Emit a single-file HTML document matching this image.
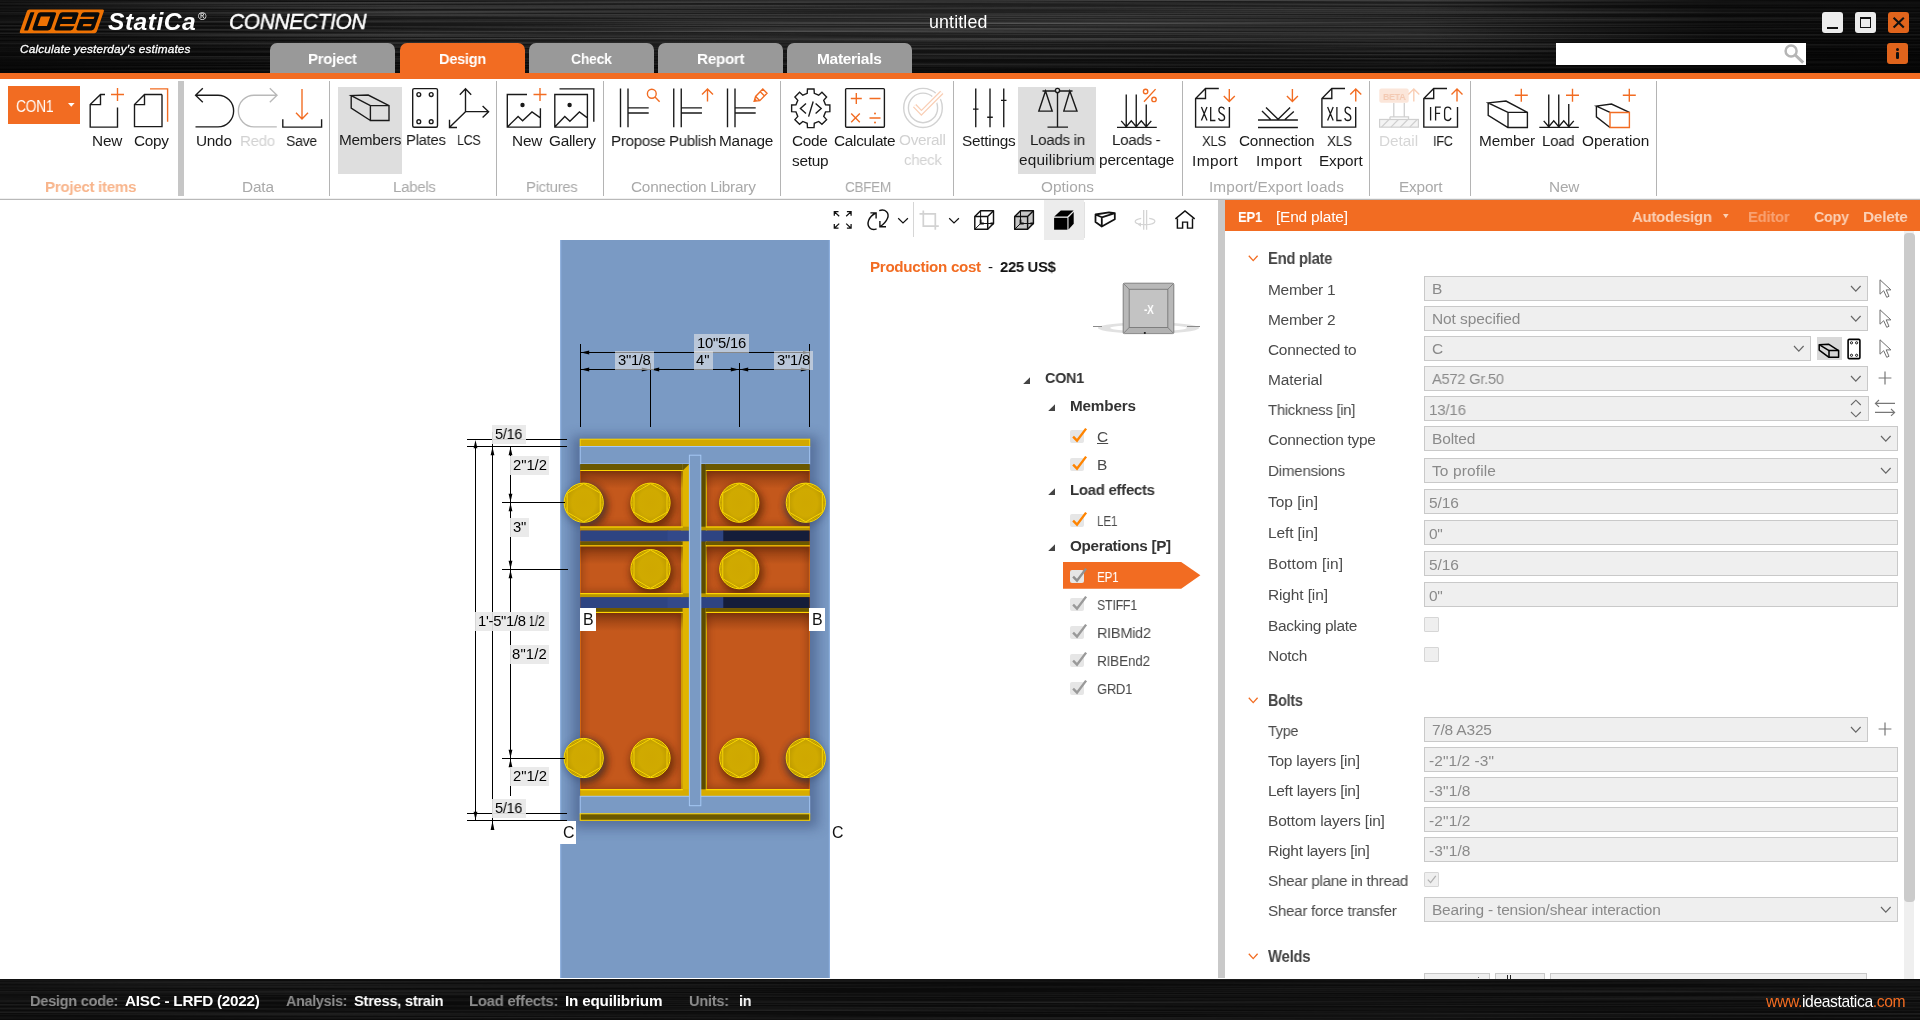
<!DOCTYPE html>
<html>
<head>
<meta charset="utf-8">
<title>IDEA StatiCa Connection</title>
<style>
*{box-sizing:border-box;margin:0;padding:0}
html,body{width:1920px;height:1020px;overflow:hidden;background:#fff;font-family:"Liberation Sans",sans-serif;color:#1a1a1a}
.a{position:absolute}
.t{position:absolute;white-space:nowrap;line-height:1;will-change:transform}
svg{position:absolute;overflow:visible}
/* ---------- header ---------- */
#hdr{left:0;top:0;width:1920px;height:73px;background:#101010;overflow:hidden}
#hdr .tex,#sb .tex{position:absolute;left:0;top:0;width:100%;height:100%}
#obar{left:0;top:73px;width:1920px;height:6px;background:#f26c22}
.tab{position:absolute;top:43px;width:125px;height:31px;border-radius:7px 7px 0 0;background:#999;color:#fff;font-weight:bold;font-size:15.5px;text-align:center;line-height:31px;letter-spacing:-0.2px}
.tab.on{background:#f26c22}
.wb{position:absolute;top:12px;width:21px;height:21px;border-radius:3px;background:#ececec}
/* ---------- ribbon ---------- */
#rib{left:0;top:79px;width:1920px;height:120px;background:#fff}
#ribline{left:0;top:198px;width:1920px;height:2px;background:linear-gradient(#f0f0f0 0,#f0f0f0 50%,#b9b9b9 50%,#b9b9b9 100%)}
.sep{position:absolute;top:82px;width:1px;height:114px;background:#b9b9b9}
.gl{position:absolute;top:179px;font-size:15px;color:#a6a6a6;white-space:nowrap;line-height:1;transform:translateX(-50%)}
.rl{position:absolute;font-size:15px;color:#1a1a1a;white-space:nowrap;line-height:20px;text-align:center;transform:translateX(-50%)}
.rl.dis{color:#c8c8c8}
.hl{position:absolute;background:#dedede}
.ic{stroke:#1a1a1a;stroke-width:1.38;fill:none;stroke-linecap:butt;stroke-linejoin:miter}
.io{stroke:#f26c22;stroke-width:1.38;fill:none}
/* ---------- status ---------- */
#sb{left:0;top:978.6px;width:1920px;height:41.4px;background:#0b0b0b;overflow:hidden}
#sb .k{color:#8a8a8a;font-weight:bold;font-size:15px}
#sb .v{color:#fff;font-weight:bold;font-size:15px}
</style>
</head>
<body>
<!-- texture filter -->
<svg width="0" height="0" style="position:absolute">
  <defs>
    <filter id="brush" x="0" y="0" width="100%" height="100%">
      <feTurbulence type="fractalNoise" baseFrequency="0.0015 0.55" numOctaves="2" seed="7" result="n"/>
      <feColorMatrix type="matrix" values="0 0 0 0 1  0 0 0 0 1  0 0 0 0 1  0.9 0 0 0 -0.33"/>
    </filter>
  </defs>
</svg>

<!-- ================= HEADER ================= -->
<div id="hdr" class="a">
  <svg class="tex" width="1920" height="73"><rect width="1920" height="73" filter="url(#brush)" opacity="0.55"/></svg>
  <div class="a" style="left:0;top:0;width:1920px;height:73px;background:radial-gradient(ellipse 900px 60px at 1000px 22px,rgba(255,255,255,.085),rgba(255,255,255,0) 100%)"></div>
  <div class="a" style="left:0;top:0;width:1920px;height:73px;background:linear-gradient(to bottom,rgba(0,0,0,0) 0%,rgba(0,0,0,0) 45%,rgba(0,0,0,.6) 100%)"></div>
  <div class="a" style="left:0;top:0;width:420px;height:73px;background:linear-gradient(to right,rgba(0,0,0,.45),rgba(0,0,0,0))"></div>
  <div class="a" style="left:1420px;top:0;width:500px;height:73px;background:linear-gradient(to right,rgba(0,0,0,0),rgba(0,0,0,.55) 60%,rgba(0,0,0,.6))"></div>
  <svg class="a" style="left:0;top:0" width="420" height="73">
<g transform="translate(19.2,33.2) skewX(-19.3)"><rect x="0" y="-23.7" width="77" height="23.7" rx="1.8" fill="#ee7203"/><path d="M4.5,-21 H7.4 Q8,-21 8,-20.4 V-3.35 Q8,-2.75 7.4,-2.75 H4.5 Q3.9,-2.75 3.9,-3.35 V-20.4 Q3.9,-21 4.5,-21 Z " fill="#0a0a0a"/><path d="M14.1,-21 H27.8 Q30.2,-21 30.2,-18.6 V-5.15 Q30.2,-2.75 27.8,-2.75 H14.1 Q11.7,-2.75 11.7,-5.15 V-18.6 Q11.7,-21 14.1,-21 Z  M15.8,-16.7 V-7.2 H25.2 V-16.7 Z" fill="#0a0a0a" fill-rule="evenodd"/><path d="M36.0,-21 H50.2 Q52.6,-21 52.6,-18.6 V-5.15 Q52.6,-2.75 50.2,-2.75 H36.0 Q33.6,-2.75 33.6,-5.15 V-18.6 Q33.6,-21 36.0,-21 Z " fill="#0a0a0a"/><rect x="37.6" y="-16.5" width="10" height="2.3" fill="#ee7203"/><rect x="38" y="-9.3" width="15" height="2.3" fill="#ee7203"/><path d="M58.0,-21 H71.19999999999999 Q73.6,-21 73.6,-18.6 V-5.15 Q73.6,-2.75 71.19999999999999,-2.75 H58.0 Q55.6,-2.75 55.6,-5.15 V-18.6 Q55.6,-21 58.0,-21 Z " fill="#0a0a0a"/><rect x="55" y="-16.5" width="14.5" height="2.3" fill="#ee7203"/><rect x="61" y="-9.3" width="8.3" height="2.3" fill="#ee7203"/></g></svg>
<div class="t" style="left:107.60px;top:10.28px;font-size:24.6px;color:#fff;font-weight:bold;font-style:italic;letter-spacing:0.507px;">StatiCa</div>
<div class="t" style="left:197.60px;top:10.67px;font-size:11.5px;color:#fff;">®</div>
<div class="t" style="left:229.00px;top:11.45px;font-size:21.2px;color:#fff;font-style:italic;letter-spacing:-0.300px;transform:scaleX(0.9835);transform-origin:0 0;-webkit-text-stroke:0.45px #fff;">CONNECTION</div>
<div class="t" style="left:19.50px;top:43.81px;font-size:11.8px;color:#fff;font-style:italic;letter-spacing:0.165px;-webkit-text-stroke:0.3px #fff;">Calculate yesterday&#x27;s estimates</div>

  <!--TABS-->
  <div class="tab" style="left:270px"></div>
  <div class="tab on" style="left:400px"></div>
  <div class="tab" style="left:529px"></div>
  <div class="tab" style="left:658px"></div>
  <div class="tab" style="left:787px"></div>
  <div class="t" style="left:307.90px;top:50.88px;font-size:15.5px;color:#fff;font-weight:bold;letter-spacing:-0.300px;transform:scaleX(0.9656);transform-origin:0 0;">Project</div>
<div class="t" style="left:438.80px;top:50.88px;font-size:15.5px;color:#fff;font-weight:bold;letter-spacing:-0.300px;transform:scaleX(0.9407);transform-origin:0 0;">Design</div>
<div class="t" style="left:571.00px;top:50.88px;font-size:15.5px;color:#fff;font-weight:bold;letter-spacing:-0.300px;transform:scaleX(0.9002);transform-origin:0 0;">Check</div>
<div class="t" style="left:696.90px;top:50.88px;font-size:15.5px;color:#fff;font-weight:bold;letter-spacing:-0.300px;transform:scaleX(0.9826);transform-origin:0 0;">Report</div>
<div class="t" style="left:817.20px;top:50.88px;font-size:15.5px;color:#fff;font-weight:bold;letter-spacing:-0.300px;transform:scaleX(0.9969);transform-origin:0 0;">Materials</div>

  <div class="t" style="left:928.60px;top:14.33px;font-size:17.8px;color:#fff;letter-spacing:0.143px;">untitled</div>

  <div class="wb" style="left:1822px"></div><div class="wb" style="left:1855px"></div><div class="wb" style="left:1888px;background:#e0641c"></div>
<div class="a" style="left:1827px;top:27px;width:11px;height:2.2px;background:#111;"></div>
<div class="a" style="left:1859.8px;top:17.2px;width:11.6px;height:10.8px;border:1.5px solid #111;border-top-width:2.4px"></div>
<svg class="a" style="left:1888px;top:12px" width="21" height="21"><path d="M5.6,5.8 L15.8,15.4 M15.8,5.8 L5.6,15.4" stroke="#111" stroke-width="2.1" fill="none"/></svg>
<div class="a" style="left:1556px;top:43px;width:250px;height:21.5px;background:#fff;"></div>
<svg class="a" style="left:1780px;top:43px" width="26" height="22"><circle cx="11.1" cy="7.9" r="5.5" stroke="#b5b5b5" stroke-width="2.5" fill="none"/><path d="M15.2,12 L23.2,19.6" stroke="#b5b5b5" stroke-width="3" fill="none"/></svg>
<div class="a" style="left:1887px;top:43px;width:21px;height:21px;background:#e0641c;border-radius:3px;"></div>
<div class="a" style="left:1896.4px;top:52.2px;width:2.6px;height:6.8px;background:#111;border-radius:1.3px;"></div>
<div class="a" style="left:1896.2px;top:48px;width:3px;height:3px;background:#111;border-radius:1.5px;"></div>

</div>
<div id="obar" class="a"></div>

<!-- ================= RIBBON ================= -->
<div id="rib" class="a"></div>
<div id="ribline" class="a"></div>
<div class="a" style="left:338px;top:87px;width:63.75px;height:87px;background:#dedede;"></div>
<div class="a" style="left:1018px;top:87px;width:77.75px;height:87px;background:#dedede;"></div>
<div class="a" style="left:178.25px;top:81px;width:5.5px;height:115px;background:#c6c6c6;"></div>
<div class="a" style="left:329px;top:81px;width:1px;height:115px;background:#b4b4b4;"></div>
<div class="a" style="left:496px;top:81px;width:1px;height:115px;background:#b4b4b4;"></div>
<div class="a" style="left:603px;top:81px;width:1px;height:115px;background:#b4b4b4;"></div>
<div class="a" style="left:780px;top:81px;width:1px;height:115px;background:#b4b4b4;"></div>
<div class="a" style="left:953px;top:81px;width:1px;height:115px;background:#b4b4b4;"></div>
<div class="a" style="left:1181.5px;top:81px;width:1px;height:115px;background:#b4b4b4;"></div>
<div class="a" style="left:1369px;top:81px;width:1px;height:115px;background:#b4b4b4;"></div>
<div class="a" style="left:1470px;top:81px;width:1px;height:115px;background:#b4b4b4;"></div>
<div class="a" style="left:1656px;top:81px;width:1px;height:115px;background:#b4b4b4;"></div>
<div class="a" style="left:8px;top:86px;width:72px;height:38px;background:#f26c22;"></div>
<div class="t" style="left:16.20px;top:98.52px;font-size:15.69px;color:#fff;letter-spacing:-0.300px;transform:scaleX(0.8784);transform-origin:0 0;">CON1</div>
<svg class="a" style="left:68px;top:102.6px" width="7" height="4"><path d="M0,0 H6.6 L3.3,3.8 Z" fill="#fff"/></svg>
<svg class="a" style="left:0;top:0" width="1920" height="200"><g transform="matrix(1,0,0,1.0117,0,-1.135)"><path class="ic" d="M105,94.5 H100.5 L90.2,104.5 V126.8 H117.5 V107.5 M100.5,94.5 V104.5 H90.2" />
<path class="io" d="M111.0,94.5 H124.0 M117.5,88.0 V101.0" />
<path class="ic" d="M162,94.5 H144.5 L134.5,104.5 V126.3 H162 V94.5 M144.5,94.5 V104.5 H134.5" />
<path class="io" d="M150,89 H167.6 V121.5" />
<path class="ic" d="M195.5,95.25 H218 A15.6,15.6 0 0 1 218,126.5 H195.5 M202.8,88.4 L195.6,95.25 L202.8,102.1" />
<path class="ic" style="stroke:#b9b9b9" d="M276.8,95.25 H254 A15.6,15.6 0 0 0 254,126.5 H276.8 M269.8,88.4 L277,95.25 L269.8,102.1"/>
<path class="ic" d="M282.8,119 V126.8 H321.6 V119" />
<path class="io" d="M302,89 V118.6 M296,112.6 L302,118.8 L308,112.6" />
<path class="ic" d="M370.4,105.5 H389 V120.2 H370.4 Z M370.4,105.5 L351.2,95.6 L368.2,95.1 L389,105.5 M351.2,95.6 V108 L370.4,120.2" />
<rect class="ic" x="412.7" y="88.7" width="24.8" height="38.2" rx="1.5"/>
<circle class="ic" cx="418.8" cy="94.6" r="1.9"/>
<circle class="ic" cx="431.2" cy="94.6" r="1.9"/>
<circle class="ic" cx="418.8" cy="121.4" r="1.9"/>
<circle class="ic" cx="431.2" cy="121.4" r="1.9"/>
<path class="ic" d="M465.5,89 V111.5 H488.5 M465.5,111.5 L449.6,127 M459.8,94.8 L465.5,88.8 L471.2,94.8 M482.6,105.8 L488.6,111.5 L482.6,117.2 M449.5,119.6 V127.1 H457" />
<path class="ic" d="M527,94.5 H507.3 V126.8 H540.4 V108 M507.6,126.4 L518.1,116.2 L522.6,120.5 L532,111.8 L540.4,117.6" />
<path class="io" d="M533.5,94.5 H546.5 M540,88.0 V101.0" />
<circle cx="522.5" cy="104.9" r="2.2" fill="#1a1a1a"/>
<path class="ic" d="M554.8,94.5 H587.4 V126.8 H554.8 Z M555,126.4 L564.8,116.2 L569.9,120.9 L579.4,111.8 L587.4,117.6 M559.5,89 H593.8 V121.5" />
<circle cx="569.6" cy="104.9" r="2.2" fill="#1a1a1a"/>
<path class="ic" d="M620.5,88.5 V127 M628.0,88.5 V127 M628.0,107.8 H648.7 M628.0,112.8 H648.7" />
<path class="ic" d="M673.75,88.5 V127 M681.25,88.5 V127 M681.25,107.8 H701.95 M681.25,112.8 H701.95" />
<path class="ic" d="M727.5,88.5 V127 M735.0,88.5 V127 M735.0,107.8 H755.7 M735.0,112.8 H755.7" />
<circle class="io" cx="651.8" cy="93.8" r="4.4"/>
<path class="io" d="M655,97 L659.6,101.8" />
<path class="io" d="M707.5,101.5 V89 M702.0,94.5 L707.5,89 L713.0,94.5" />
<path class="io" d="M754.2,101.2 L755.6,96.4 L762.8,89.2 L767,93.4 L759.8,100.6 Z M755.6,96.4 L759.8,100.6 M760.3,91.7 L764.5,95.9" />
<path d="M753.6,101.8 L755,98.2 L757.2,100.4 Z" fill="#f26c22"/>
<path class="ic" d="M807.21,93.42 L807.47,89.08 L814.03,89.08 L814.29,93.42 L818.70,95.24 L821.95,92.36 L826.59,97.00 L823.71,100.25 L825.53,104.66 L829.87,104.92 L829.87,111.48 L825.53,111.74 L823.71,116.15 L826.59,119.40 L821.95,124.04 L818.70,121.16 L814.29,122.98 L814.03,127.32 L807.47,127.32 L807.21,122.98 L802.80,121.16 L799.55,124.04 L794.91,119.40 L797.79,116.15 L795.97,111.74 L791.63,111.48 L791.63,104.92 L795.97,104.66 L797.79,100.25 L794.91,97.00 L799.55,92.36 L802.80,95.24 Z" stroke-linejoin="round"/>
<path class="ic" d="M806,103.4 L800.4,108.4 L806,113.4 M813.2,101.4 L808.6,116.4 M815.6,103.4 L821.2,108.4 L815.6,113.4" />
<rect class="ic" x="845.6" y="88.7" width="38.8" height="38.2" rx="1"/>
<path class="io" d="M850.8,98.5 H861.8 M856.3,93 V104 M869.5,98.5 H880.5 M851.2,113.4 L859.8,122 M859.8,113.4 L851.2,122 M869.5,117.75 H880.5" />
<circle cx="875" cy="113.4" r="1" fill="#f26c22"/><circle cx="875" cy="122.1" r="1" fill="#f26c22"/>
<circle cx="923" cy="107.8" r="19.3" fill="none" stroke="#d2d2d2" stroke-width="1.4"/><circle cx="923" cy="107.8" r="14.6" fill="none" stroke="#d2d2d2" stroke-width="1.4"/>
<path d="M914.6,105.6 L921.4,112.6 L941.8,92.4" fill="none" stroke="#fff" stroke-width="7.5"/>
<path d="M914.6,105.6 L921.4,112.6 L941.8,92.4" fill="none" stroke="#f9cfb6" stroke-width="4.6" stroke-linejoin="miter"/>
<path d="M914.6,105.6 L921.4,112.6 L941.8,92.4" fill="none" stroke="#fff" stroke-width="2"/>
<path class="ic" d="M975.75,88.5 V127 M990,88.5 V127 M1003.75,88.5 V127 M973,109 H978.5 M987.2,117 H992.8 M1001,100.3 H1006.5" />
<path class="ic" d="M1057.5,92.5 V126.7 M1047.5,126.8 H1068 M1042.5,91 H1055.4 M1059.6,91 H1072.5 M1045.5,91 L1038.8,111 H1052.2 Z M1069.8,91 L1063.8,111 H1077 Z" />
<circle class="ic" cx="1057.5" cy="90.6" r="2.1"/>
<path class="ic" d="M1117,127 H1156.8 M1126.25,94.6 V126 M1136.25,94.6 V126 M1146.25,104.4 V126 M1121.2,120.6 L1126.25,126.4 L1131.25,120.6 L1136.25,126.4 L1141.25,120.6 L1146.25,126.4 L1151.3,120.6" />
<circle class="io" cx="1145.6" cy="91.6" r="2.2"/><circle class="io" cx="1154" cy="99.4" r="2.2"/>
<path class="io" d="M1155.6,89.2 L1144,101.6" />
<path class="ic" d="M1218.8,88.6 H1205.5 L1195.6,98.5 V126.8 H1229.4 V107 M1205.5,88.6 V98.5 H1195.6" />
<path class="ic" d="M1201.4,107 L1207.0,120.2 M1207.0,107 L1201.4,120.2 M1210.7,107 V120.2 H1215.4 M1224.4,109.2 Q1223.8000000000002,107 1221.6000000000001,107 Q1218.9,107 1218.9,110 Q1218.9,112.4 1221.6000000000001,113.6 Q1224.6000000000001,114.9 1224.6000000000001,117.4 Q1224.6000000000001,120.2 1221.6000000000001,120.2 Q1219.1000000000001,120.2 1218.6000000000001,117.8" style="stroke-width:1.3"/>
<path class="io" d="M1229.3,89 V101.5 M1223.8,96.0 L1229.3,101.5 L1234.8,96.0" />
<path class="ic" d="M1258,119.8 H1297.9 M1258,127.2 H1297.9 M1262,110.9 L1270.6,119.3 M1266,107.3 L1278.1,119 L1290.1,107.3 M1285,119.3 L1293.8,111.3" />
<path class="io" d="M1292.4,89 V101.5 M1286.9,96.0 L1292.4,101.5 L1297.9,96.0" />
<path class="ic" d="M1345,88.6 H1331.8 L1321.9,98.5 V126.8 H1355.7 V107 M1331.8,88.6 V98.5 H1321.9" />
<path class="ic" d="M1327.6,107 L1333.1999999999998,120.2 M1333.1999999999998,107 L1327.6,120.2 M1336.8999999999999,107 V120.2 H1341.6 M1350.6,109.2 Q1350.0,107 1347.8,107 Q1345.1,107 1345.1,110 Q1345.1,112.4 1347.8,113.6 Q1350.8,114.9 1350.8,117.4 Q1350.8,120.2 1347.8,120.2 Q1345.3,120.2 1344.8,117.8" style="stroke-width:1.3"/>
<path class="io" d="M1355.75,101.5 V89 M1350.25,94.5 L1355.75,89 L1361.25,94.5" />
<rect x="1379.3" y="88.6" width="29.4" height="14.2" rx="2" fill="#fbe6da"/>
<path d="M1393.8,103 V116.5 M1404.3,103 V116.5 M1390,116.6 H1408.5 V119 M1390,116.6 V119" fill="none" stroke="#d0d0d0" stroke-width="1.3"/>
<rect x="1379.6" y="119.2" width="38.8" height="7.6" fill="#f4f4f4" stroke="#cfcfcf" stroke-width="1.2"/>
<path d="M1381.5,126.8 L1389.0,119.2 M1390.9,126.8 L1398.4,119.2 M1400.3,126.8 L1407.8,119.2 M1409.7,126.8 L1417.2,119.2" fill="none" stroke="#cfcfcf" stroke-width="1.2"/>
<path d="M1413.8,101.5 V89 M1408.3,94.5 L1413.8,89 L1419.3,94.5" fill="none" stroke="#f9cfb6" stroke-width="1.4"/>
<path class="ic" d="M1447,88.6 H1433.7 L1423.8,98.5 V126.8 H1457.5 V107 M1433.7,88.6 V98.5 H1423.8" />
<path class="ic" d="M1430.6,107 V120.2 M1435.6,120.2 V107 H1440.8 M1435.6,113.2 H1440.1 M1450.8999999999999,109.6 Q1450.3999999999999,107 1447.8999999999999,107 Q1444.6,107 1444.6,110.6 V116.6 Q1444.6,120.2 1447.8999999999999,120.2 Q1450.3999999999999,120.2 1450.8999999999999,117.6" style="stroke-width:1.3"/>
<path class="io" d="M1457,101.5 V89 M1451.5,94.5 L1457,89 L1462.5,94.5" />
<path class="ic" d="M1508,112.2 H1527.4 V127.2 H1508 Z M1508,112.2 L1488.2,102.8 L1506,101 L1527.4,112.2 M1488.2,102.8 V115.2 L1508,127.2" />
<path class="io" d="M1514.8,95.3 H1527.8 M1521.3,88.8 V101.8" />
<path class="ic" d="M1539.3,127 H1578.8 M1548.75,94.6 V126 M1558.75,94.6 V126 M1568.75,104 V126 M1543.7,120.6 L1548.75,126.4 L1553.75,120.6 L1558.75,126.4 L1563.75,120.6 L1568.75,126.4 L1573.8,120.6" />
<path class="io" d="M1566.0,95.3 H1579.0 M1572.5,88.8 V101.8" />
<path class="ic" d="M1610,112.3 L1596.4,106 L1611.5,104 L1629.4,112.3 M1596.4,106 V116.6 L1610,127.2" />
<path class="io" d="M1610,112.3 H1629.4 V127.2 H1610 Z" />
<path class="io" d="M1622.8,95.3 H1635.8 M1629.3,88.8 V101.8" /></g></svg>
<div class="t" style="left:1382.60px;top:91.95px;font-size:9.75px;color:#f3c9b2;font-weight:bold;letter-spacing:-0.300px;transform:scaleX(0.9030);transform-origin:0 0;">BETA</div>
<div class="t" style="left:91.90px;top:132.89px;font-size:15.37px;color:#1a1a1a;letter-spacing:-0.149px;">New</div>
<div class="t" style="left:133.65px;top:132.89px;font-size:15.37px;color:#1a1a1a;letter-spacing:-0.300px;transform:scaleX(0.9991);transform-origin:0 0;">Copy</div>
<div class="t" style="left:195.90px;top:132.89px;font-size:15.37px;color:#1a1a1a;letter-spacing:-0.265px;">Undo</div>
<div class="t" style="left:239.90px;top:132.89px;font-size:15.37px;color:#d2d2d2;letter-spacing:-0.300px;transform:scaleX(0.9820);transform-origin:0 0;">Redo</div>
<div class="t" style="left:285.65px;top:132.89px;font-size:15.37px;color:#1a1a1a;letter-spacing:-0.300px;transform:scaleX(0.9141);transform-origin:0 0;">Save</div>
<div class="t" style="left:338.90px;top:132.49px;font-size:15.37px;color:#1a1a1a;letter-spacing:-0.267px;">Members</div>
<div class="t" style="left:405.65px;top:132.49px;font-size:15.37px;color:#1a1a1a;letter-spacing:-0.300px;transform:scaleX(0.9692);transform-origin:0 0;">Plates</div>
<div class="t" style="left:457.40px;top:132.49px;font-size:15.37px;color:#1a1a1a;letter-spacing:-0.300px;transform:scaleX(0.8089);transform-origin:0 0;">LCS</div>
<div class="t" style="left:511.90px;top:132.89px;font-size:15.37px;color:#1a1a1a;letter-spacing:-0.149px;">New</div>
<div class="t" style="left:549.40px;top:132.89px;font-size:15.37px;color:#1a1a1a;letter-spacing:-0.289px;">Gallery</div>
<div class="t" style="left:611.40px;top:132.89px;font-size:15.37px;color:#1a1a1a;letter-spacing:-0.300px;transform:scaleX(0.9865);transform-origin:0 0;">Propose</div>
<div class="t" style="left:668.65px;top:132.89px;font-size:15.37px;color:#1a1a1a;letter-spacing:-0.300px;transform:scaleX(0.9761);transform-origin:0 0;">Publish</div>
<div class="t" style="left:718.65px;top:132.89px;font-size:15.37px;color:#1a1a1a;letter-spacing:-0.219px;">Manage</div>
<div class="t" style="left:792.40px;top:132.89px;font-size:15.37px;color:#1a1a1a;letter-spacing:-0.300px;transform:scaleX(0.9960);transform-origin:0 0;">Code</div>
<div class="t" style="left:792.40px;top:152.89px;font-size:15.37px;color:#1a1a1a;letter-spacing:-0.287px;">setup</div>
<div class="t" style="left:833.65px;top:132.89px;font-size:15.37px;color:#1a1a1a;letter-spacing:-0.300px;transform:scaleX(0.9963);transform-origin:0 0;">Calculate</div>
<div class="t" style="left:898.90px;top:132.49px;font-size:15.37px;color:#d2d2d2;letter-spacing:-0.300px;transform:scaleX(0.9961);transform-origin:0 0;">Overall</div>
<div class="t" style="left:903.90px;top:152.49px;font-size:15.37px;color:#d2d2d2;letter-spacing:-0.300px;transform:scaleX(0.9743);transform-origin:0 0;">check</div>
<div class="t" style="left:961.90px;top:132.89px;font-size:15.37px;color:#1a1a1a;letter-spacing:-0.262px;">Settings</div>
<div class="t" style="left:1029.90px;top:132.49px;font-size:15.37px;color:#1a1a1a;letter-spacing:-0.300px;transform:scaleX(0.9855);transform-origin:0 0;">Loads in</div>
<div class="t" style="left:1018.90px;top:152.49px;font-size:15.37px;color:#1a1a1a;letter-spacing:0.163px;">equilibrium</div>
<div class="t" style="left:1111.90px;top:132.49px;font-size:15.37px;color:#1a1a1a;letter-spacing:-0.300px;transform:scaleX(0.9845);transform-origin:0 0;">Loads -</div>
<div class="t" style="left:1098.90px;top:152.49px;font-size:15.37px;color:#1a1a1a;letter-spacing:-0.162px;">percentage</div>
<div class="t" style="left:1201.90px;top:132.89px;font-size:15.37px;color:#1a1a1a;letter-spacing:-0.300px;transform:scaleX(0.8506);transform-origin:0 0;">XLS</div>
<div class="t" style="left:1191.90px;top:152.89px;font-size:15.37px;color:#1a1a1a;letter-spacing:0.428px;">Import</div>
<div class="t" style="left:1239.40px;top:132.89px;font-size:15.37px;color:#1a1a1a;letter-spacing:-0.229px;">Connection</div>
<div class="t" style="left:1255.65px;top:152.89px;font-size:15.37px;color:#1a1a1a;letter-spacing:0.428px;">Import</div>
<div class="t" style="left:1327.40px;top:132.89px;font-size:15.37px;color:#1a1a1a;letter-spacing:-0.300px;transform:scaleX(0.8769);transform-origin:0 0;">XLS</div>
<div class="t" style="left:1318.90px;top:152.89px;font-size:15.37px;color:#1a1a1a;letter-spacing:-0.144px;">Export</div>
<div class="t" style="left:1379.40px;top:132.89px;font-size:15.37px;color:#d6d6d6;letter-spacing:-0.019px;">Detail</div>
<div class="t" style="left:1433.15px;top:132.89px;font-size:15.37px;color:#1a1a1a;letter-spacing:-0.300px;transform:scaleX(0.8258);transform-origin:0 0;">IFC</div>
<div class="t" style="left:1478.90px;top:132.89px;font-size:15.37px;color:#1a1a1a;letter-spacing:-0.034px;">Member</div>
<div class="t" style="left:1542.40px;top:132.89px;font-size:15.37px;color:#1a1a1a;letter-spacing:-0.300px;transform:scaleX(0.9822);transform-origin:0 0;">Load</div>
<div class="t" style="left:1581.90px;top:132.89px;font-size:15.37px;color:#1a1a1a;letter-spacing:-0.006px;">Operation</div>
<div class="t" style="left:44.50px;top:179.10px;font-size:15.48px;color:#f8b58c;font-weight:bold;letter-spacing:-0.300px;transform:scaleX(0.9774);transform-origin:0 0;">Project items</div>
<div class="t" style="left:241.90px;top:179.19px;font-size:15.37px;color:#a9a9a9;letter-spacing:-0.172px;">Data</div>
<div class="t" style="left:392.65px;top:179.19px;font-size:15.37px;color:#a9a9a9;letter-spacing:-0.300px;transform:scaleX(0.9808);transform-origin:0 0;">Labels</div>
<div class="t" style="left:525.65px;top:179.19px;font-size:15.37px;color:#a9a9a9;letter-spacing:-0.300px;transform:scaleX(0.9678);transform-origin:0 0;">Pictures</div>
<div class="t" style="left:630.65px;top:179.19px;font-size:15.37px;color:#a9a9a9;letter-spacing:-0.239px;">Connection Library</div>
<div class="t" style="left:844.90px;top:179.19px;font-size:15.37px;color:#a9a9a9;letter-spacing:-0.300px;transform:scaleX(0.8784);transform-origin:0 0;">CBFEM</div>
<div class="t" style="left:1041.40px;top:179.19px;font-size:15.37px;color:#a9a9a9;">Options</div>
<div class="t" style="left:1209.40px;top:179.19px;font-size:15.37px;color:#a9a9a9;letter-spacing:0.094px;">Import/Export loads</div>
<div class="t" style="left:1398.90px;top:179.19px;font-size:15.37px;color:#a9a9a9;letter-spacing:-0.194px;">Export</div>
<div class="t" style="left:1548.90px;top:179.19px;font-size:15.37px;color:#a9a9a9;letter-spacing:-0.149px;">New</div>


<!-- ================= VIEWPORT ================= -->
<svg class="a" style="left:0;top:0" width="1920" height="1020"><defs><filter id="bl6" x="-30%" y="-30%" width="160%" height="160%"><feGaussianBlur stdDeviation="6"/></filter><filter id="bl3" x="-30%" y="-30%" width="160%" height="160%"><feGaussianBlur stdDeviation="3.5"/></filter><radialGradient id="bg"><stop offset="0" stop-color="#cfa800"/><stop offset="0.7" stop-color="#d0aa00"/><stop offset="1" stop-color="#c29e00"/></radialGradient><clipPath id="colclip"><rect x="560.3" y="240" width="269.5" height="738"/></clipPath><clipPath id="orl"><rect x="580.2" y="464" width="102.6" height="332.3"/></clipPath><clipPath id="orr"><rect x="705.8" y="464" width="103.9" height="332.3"/></clipPath></defs>
<rect x="560.3" y="240" width="269.5" height="738" fill="#7a9ac4"/>
<rect x="560.3" y="240" width="1" height="738" fill="#8cb0e2"/><rect x="828.8" y="240" width="1" height="738" fill="#8cb0e2"/>
<g clip-path="url(#colclip)"><rect x="572" y="436" width="246" height="392" fill="#3a507c" opacity="0.55" filter="url(#bl6)"/></g>
<rect x="580.2" y="439.2" width="229.5" height="7.3" fill="#d3a800" stroke="#ffd600" stroke-width="1"/>
<rect x="580.2" y="446.5" width="229.5" height="17.5" fill="#7a9ac4" stroke="#a6c8f6" stroke-width="1"/>
<rect x="580.2" y="464" width="102.59999999999991" height="6.5" fill="#6a5800"/><rect x="705.8" y="464" width="103.90000000000009" height="6.5" fill="#6a5800"/>
<rect x="580.2" y="470.5" width="102.59999999999991" height="325.8" fill="#c4581c"/>
<rect x="705.8" y="470.5" width="103.90000000000009" height="325.8" fill="#c4581c"/>
<rect x="580.0" y="470.5" width="1" height="319" fill="#f07818"/><rect x="808.9000000000001" y="470.5" width="1" height="319" fill="#f07818"/>
<rect x="682.8" y="464" width="6.600000000000023" height="332.3" fill="#e0b400"/>
<rect x="681.1999999999999" y="470.5" width="1.6" height="319" fill="#ffd600"/>
<rect x="700.8" y="464" width="5.0" height="332.3" fill="#5c4c00"/>
<rect x="705.8" y="470.5" width="1.2" height="319" fill="#ffd600"/>
<g clip-path="url(#orl)"><circle cx="585.7" cy="506.2" r="22.5" fill="#4a1c00" opacity="0.62" filter="url(#bl3)"/><circle cx="652.5" cy="506.2" r="22.5" fill="#4a1c00" opacity="0.62" filter="url(#bl3)"/><circle cx="741.3" cy="506.2" r="22.5" fill="#4a1c00" opacity="0.62" filter="url(#bl3)"/><circle cx="807.8" cy="506.2" r="22.5" fill="#4a1c00" opacity="0.62" filter="url(#bl3)"/><circle cx="652.5" cy="572.7" r="22.5" fill="#4a1c00" opacity="0.62" filter="url(#bl3)"/><circle cx="741.3" cy="572.7" r="22.5" fill="#4a1c00" opacity="0.62" filter="url(#bl3)"/><circle cx="585.7" cy="761.5" r="22.5" fill="#4a1c00" opacity="0.62" filter="url(#bl3)"/><circle cx="652.5" cy="761.5" r="22.5" fill="#4a1c00" opacity="0.62" filter="url(#bl3)"/><circle cx="741.3" cy="761.5" r="22.5" fill="#4a1c00" opacity="0.62" filter="url(#bl3)"/><circle cx="807.8" cy="761.5" r="22.5" fill="#4a1c00" opacity="0.62" filter="url(#bl3)"/></g><g clip-path="url(#orr)"><circle cx="585.7" cy="506.2" r="22.5" fill="#4a1c00" opacity="0.62" filter="url(#bl3)"/><circle cx="652.5" cy="506.2" r="22.5" fill="#4a1c00" opacity="0.62" filter="url(#bl3)"/><circle cx="741.3" cy="506.2" r="22.5" fill="#4a1c00" opacity="0.62" filter="url(#bl3)"/><circle cx="807.8" cy="506.2" r="22.5" fill="#4a1c00" opacity="0.62" filter="url(#bl3)"/><circle cx="652.5" cy="572.7" r="22.5" fill="#4a1c00" opacity="0.62" filter="url(#bl3)"/><circle cx="741.3" cy="572.7" r="22.5" fill="#4a1c00" opacity="0.62" filter="url(#bl3)"/><circle cx="585.7" cy="761.5" r="22.5" fill="#4a1c00" opacity="0.62" filter="url(#bl3)"/><circle cx="652.5" cy="761.5" r="22.5" fill="#4a1c00" opacity="0.62" filter="url(#bl3)"/><circle cx="741.3" cy="761.5" r="22.5" fill="#4a1c00" opacity="0.62" filter="url(#bl3)"/><circle cx="807.8" cy="761.5" r="22.5" fill="#4a1c00" opacity="0.62" filter="url(#bl3)"/></g>
<linearGradient id="topsh" x1="0" y1="0" x2="0" y2="1"><stop offset="0" stop-color="#401400" stop-opacity="0.42"/><stop offset="1" stop-color="#401400" stop-opacity="0"/></linearGradient>
<clipPath id="cc0"><rect x="580.2" y="470.5" width="102.59999999999991" height="56.200000000000045"/></clipPath>
<rect x="580.2" y="470.5" width="102.59999999999991" height="18" fill="url(#topsh)"/>
<g clip-path="url(#cc0)"><rect x="578.2" y="468.5" width="106.59999999999991" height="60.200000000000045" fill="none" stroke="#3a1200" stroke-width="9" opacity="0.30" filter="url(#bl3)"/></g>
<clipPath id="cc1"><rect x="705.8" y="470.5" width="103.90000000000009" height="56.200000000000045"/></clipPath>
<rect x="705.8" y="470.5" width="103.90000000000009" height="18" fill="url(#topsh)"/>
<g clip-path="url(#cc1)"><rect x="703.8" y="468.5" width="107.90000000000009" height="60.200000000000045" fill="none" stroke="#3a1200" stroke-width="9" opacity="0.30" filter="url(#bl3)"/></g>
<clipPath id="cc2"><rect x="580.2" y="546.3" width="102.59999999999991" height="47.0"/></clipPath>
<rect x="580.2" y="546.3" width="102.59999999999991" height="18" fill="url(#topsh)"/>
<g clip-path="url(#cc2)"><rect x="578.2" y="544.3" width="106.59999999999991" height="51.0" fill="none" stroke="#3a1200" stroke-width="9" opacity="0.30" filter="url(#bl3)"/></g>
<clipPath id="cc3"><rect x="705.8" y="546.3" width="103.90000000000009" height="47.0"/></clipPath>
<rect x="705.8" y="546.3" width="103.90000000000009" height="18" fill="url(#topsh)"/>
<g clip-path="url(#cc3)"><rect x="703.8" y="544.3" width="107.90000000000009" height="51.0" fill="none" stroke="#3a1200" stroke-width="9" opacity="0.30" filter="url(#bl3)"/></g>
<clipPath id="cc4"><rect x="580.2" y="613" width="102.59999999999991" height="176.29999999999995"/></clipPath>
<rect x="580.2" y="613" width="102.59999999999991" height="18" fill="url(#topsh)"/>
<g clip-path="url(#cc4)"><rect x="578.2" y="611" width="106.59999999999991" height="180.29999999999995" fill="none" stroke="#3a1200" stroke-width="9" opacity="0.30" filter="url(#bl3)"/></g>
<clipPath id="cc5"><rect x="705.8" y="613" width="103.90000000000009" height="176.29999999999995"/></clipPath>
<rect x="705.8" y="613" width="103.90000000000009" height="18" fill="url(#topsh)"/>
<g clip-path="url(#cc5)"><rect x="703.8" y="611" width="107.90000000000009" height="180.29999999999995" fill="none" stroke="#3a1200" stroke-width="9" opacity="0.30" filter="url(#bl3)"/></g>
<g clip-path="url(#colclip)"><circle cx="583.7" cy="504.7" r="21" fill="#34486e" opacity="0.5" filter="url(#bl3)"/></g>
<g clip-path="url(#colclip)"><circle cx="805.8" cy="504.7" r="21" fill="#34486e" opacity="0.5" filter="url(#bl3)"/></g>
<g clip-path="url(#colclip)"><circle cx="583.7" cy="760" r="21" fill="#34486e" opacity="0.5" filter="url(#bl3)"/></g>
<g clip-path="url(#colclip)"><circle cx="805.8" cy="760" r="21" fill="#34486e" opacity="0.5" filter="url(#bl3)"/></g>
<rect x="580.2" y="526.7" width="109.19999999999993" height="3.8" fill="#b89600"/><rect x="700.8" y="526.7" width="108.90000000000009" height="3.8" fill="#b89600"/>
<rect x="580.2" y="526.4000000000001" width="102.59999999999991" height="1.2" fill="#ffd600"/><rect x="705.8" y="526.4000000000001" width="103.90000000000009" height="1.2" fill="#ffd600"/>
<rect x="580.2" y="530.5" width="88" height="11" fill="#2e4482"/><rect x="667.5" y="530.5" width="21.899999999999977" height="11" fill="#33498a"/>
<rect x="700.8" y="530.5" width="23.200000000000045" height="11" fill="#2e4482"/><rect x="723.3" y="530.5" width="86.40000000000009" height="11" fill="#151d3a"/>
<rect x="580.2" y="541.5" width="102.59999999999991" height="3.8" fill="#6a5800"/><rect x="705.8" y="541.5" width="103.90000000000009" height="3.8" fill="#6a5800"/>
<rect x="580.2" y="545.3" width="102.59999999999991" height="1.1" fill="#ffd600"/><rect x="705.8" y="545.3" width="103.90000000000009" height="1.1" fill="#ffd600"/>
<rect x="682.8" y="541.5" width="6.600000000000023" height="4.9" fill="#e0b400"/>
<rect x="580.2" y="593.3" width="109.19999999999993" height="3.8" fill="#b89600"/><rect x="700.8" y="593.3" width="108.90000000000009" height="3.8" fill="#b89600"/>
<rect x="580.2" y="593.0" width="102.59999999999991" height="1.2" fill="#ffd600"/><rect x="705.8" y="593.0" width="103.90000000000009" height="1.2" fill="#ffd600"/>
<rect x="580.2" y="597.0999999999999" width="88" height="11" fill="#2e4482"/><rect x="667.5" y="597.0999999999999" width="21.899999999999977" height="11" fill="#33498a"/>
<rect x="700.8" y="597.0999999999999" width="23.200000000000045" height="11" fill="#2e4482"/><rect x="723.3" y="597.0999999999999" width="86.40000000000009" height="11" fill="#151d3a"/>
<rect x="580.2" y="608.0999999999999" width="102.59999999999991" height="3.8" fill="#6a5800"/><rect x="705.8" y="608.0999999999999" width="103.90000000000009" height="3.8" fill="#6a5800"/>
<rect x="580.2" y="611.8999999999999" width="102.59999999999991" height="1.1" fill="#ffd600"/><rect x="705.8" y="611.8999999999999" width="103.90000000000009" height="1.1" fill="#ffd600"/>
<rect x="682.8" y="608.0999999999999" width="6.600000000000023" height="4.9" fill="#e0b400"/>
<path d="M682.8,470.5 L682.8,464 L689.4,464 Z" fill="#6a5800"/>
<path d="M580.2,470.5 H682.8 M705.8,470.5 H809.7" stroke="#ffd600" stroke-width="1.1" fill="none"/>
<rect x="580.2" y="789.3" width="109.19999999999993" height="7" fill="#d8ac00"/><rect x="700.8" y="789.3" width="108.90000000000009" height="7" fill="#d8ac00"/>
<path d="M580.2,789.6 H682.8 M705.8,789.6 H809.7" stroke="#ffd600" stroke-width="1.1" fill="none"/>
<rect x="580.2" y="796.3" width="229.5" height="17.5" fill="#7a9ac4" stroke="#a6c8f6" stroke-width="1"/>
<rect x="580.2" y="813.8" width="229.5" height="6.5" fill="#6a5800" stroke="#ffd600" stroke-width="1"/>
<rect x="689.4" y="455.2" width="11.399999999999977" height="350.5" fill="#7a9ac4" stroke="#a6c8f6" stroke-width="1"/>
<circle cx="583.7" cy="502.7" r="19.6" fill="#b39000" stroke="#ffe000" stroke-width="1"/>
<circle cx="583.7" cy="502.7" r="18.1" fill="none" stroke="#dcb600" stroke-width="0.7"/>
<polygon points="583.70,483.60 600.24,493.15 600.24,512.25 583.70,521.80 567.16,512.25 567.16,493.15" fill="url(#bg)" stroke="#ffdd00" stroke-width="0.9" stroke-linejoin="round"/>
<circle cx="650.5" cy="502.7" r="19.6" fill="#b39000" stroke="#ffe000" stroke-width="1"/>
<circle cx="650.5" cy="502.7" r="18.1" fill="none" stroke="#dcb600" stroke-width="0.7"/>
<polygon points="650.50,483.60 667.04,493.15 667.04,512.25 650.50,521.80 633.96,512.25 633.96,493.15" fill="url(#bg)" stroke="#ffdd00" stroke-width="0.9" stroke-linejoin="round"/>
<circle cx="739.3" cy="502.7" r="19.6" fill="#b39000" stroke="#ffe000" stroke-width="1"/>
<circle cx="739.3" cy="502.7" r="18.1" fill="none" stroke="#dcb600" stroke-width="0.7"/>
<polygon points="739.30,483.60 755.84,493.15 755.84,512.25 739.30,521.80 722.76,512.25 722.76,493.15" fill="url(#bg)" stroke="#ffdd00" stroke-width="0.9" stroke-linejoin="round"/>
<circle cx="805.8" cy="502.7" r="19.6" fill="#b39000" stroke="#ffe000" stroke-width="1"/>
<circle cx="805.8" cy="502.7" r="18.1" fill="none" stroke="#dcb600" stroke-width="0.7"/>
<polygon points="805.80,483.60 822.34,493.15 822.34,512.25 805.80,521.80 789.26,512.25 789.26,493.15" fill="url(#bg)" stroke="#ffdd00" stroke-width="0.9" stroke-linejoin="round"/>
<circle cx="650.5" cy="569.2" r="19.6" fill="#b39000" stroke="#ffe000" stroke-width="1"/>
<circle cx="650.5" cy="569.2" r="18.1" fill="none" stroke="#dcb600" stroke-width="0.7"/>
<polygon points="650.50,550.10 667.04,559.65 667.04,578.75 650.50,588.30 633.96,578.75 633.96,559.65" fill="url(#bg)" stroke="#ffdd00" stroke-width="0.9" stroke-linejoin="round"/>
<circle cx="739.3" cy="569.2" r="19.6" fill="#b39000" stroke="#ffe000" stroke-width="1"/>
<circle cx="739.3" cy="569.2" r="18.1" fill="none" stroke="#dcb600" stroke-width="0.7"/>
<polygon points="739.30,550.10 755.84,559.65 755.84,578.75 739.30,588.30 722.76,578.75 722.76,559.65" fill="url(#bg)" stroke="#ffdd00" stroke-width="0.9" stroke-linejoin="round"/>
<circle cx="583.7" cy="758" r="19.6" fill="#b39000" stroke="#ffe000" stroke-width="1"/>
<circle cx="583.7" cy="758" r="18.1" fill="none" stroke="#dcb600" stroke-width="0.7"/>
<polygon points="583.70,738.90 600.24,748.45 600.24,767.55 583.70,777.10 567.16,767.55 567.16,748.45" fill="url(#bg)" stroke="#ffdd00" stroke-width="0.9" stroke-linejoin="round"/>
<circle cx="650.5" cy="758" r="19.6" fill="#b39000" stroke="#ffe000" stroke-width="1"/>
<circle cx="650.5" cy="758" r="18.1" fill="none" stroke="#dcb600" stroke-width="0.7"/>
<polygon points="650.50,738.90 667.04,748.45 667.04,767.55 650.50,777.10 633.96,767.55 633.96,748.45" fill="url(#bg)" stroke="#ffdd00" stroke-width="0.9" stroke-linejoin="round"/>
<circle cx="739.3" cy="758" r="19.6" fill="#b39000" stroke="#ffe000" stroke-width="1"/>
<circle cx="739.3" cy="758" r="18.1" fill="none" stroke="#dcb600" stroke-width="0.7"/>
<polygon points="739.30,738.90 755.84,748.45 755.84,767.55 739.30,777.10 722.76,767.55 722.76,748.45" fill="url(#bg)" stroke="#ffdd00" stroke-width="0.9" stroke-linejoin="round"/>
<circle cx="805.8" cy="758" r="19.6" fill="#b39000" stroke="#ffe000" stroke-width="1"/>
<circle cx="805.8" cy="758" r="18.1" fill="none" stroke="#dcb600" stroke-width="0.7"/>
<polygon points="805.80,738.90 822.34,748.45 822.34,767.55 805.80,777.10 789.26,767.55 789.26,748.45" fill="url(#bg)" stroke="#ffdd00" stroke-width="0.9" stroke-linejoin="round"/></svg>
<svg class="a" style="left:0;top:0" width="1920" height="1020"><path d="M580.5,344 V426.8 M650.5,362.7 V426.8 M739.5,362.7 V426.8 M809.5,344 V426.8 M580.5,352.5 H809.5 M580.5,369.5 H809.5 M467,439.5 H567 M467,446.5 H567 M467,813.5 H567 M467,820.5 H567 M502.3,502.5 H564.7 M502.3,569.5 H568 M502.3,758.5 H564.7 M475.5,446.5 V820.5 M492.5,431.5 V829 M510.5,446.5 V796 " stroke="#000" stroke-width="1" fill="none" shape-rendering="crispEdges"/>
<path d="M581.0,352.5 L589.2,350.6 L589.2,354.4 Z M809.0,352.5 L803.0,353.9 L803.0,351.1 Z M581.0,369.5 L589.2,367.6 L589.2,371.4 Z M651.0,369.5 L659.2,367.6 L659.2,371.4 Z M650.0,369.5 L641.8,371.4 L641.8,367.6 Z M739.0,369.5 L730.8,371.4 L730.8,367.6 Z M809.0,369.5 L800.8,371.4 L800.8,367.6 Z M740.0,369.5 L748.2,367.6 L748.2,371.4 Z M475.5,440.0 L477.4,448.2 L473.6,448.2 Z M475.5,820.0 L473.6,811.8 L477.4,811.8 Z M492.5,447.0 L494.4,455.2 L490.6,455.2 Z M492.5,821.0 L494.4,830.0 L490.6,830.0 Z M510.5,447.0 L512.4,455.2 L508.6,455.2 Z M510.5,502.0 L508.6,493.8 L512.4,493.8 Z M510.5,503.0 L512.4,511.2 L508.6,511.2 Z M510.5,569.0 L508.6,560.8 L512.4,560.8 Z M510.5,570.0 L512.4,578.2 L508.6,578.2 Z M510.5,758.0 L508.6,749.8 L512.4,749.8 Z M510.5,759.0 L512.4,767.2 L508.6,767.2 Z" fill="#000"/></svg>
<div class="a" style="left:694.2px;top:334.2px;width:54.7px;height:18.6px;background:rgba(232,232,232,0.58);"></div>
<div class="t" style="left:697.00px;top:336.47px;font-size:14.8px;color:#000;letter-spacing:-0.204px;">10&quot;5/16</div>
<div class="a" style="left:615px;top:351.3px;width:39px;height:18.6px;background:rgba(232,232,232,0.58);"></div>
<div class="t" style="left:618.30px;top:353.17px;font-size:14.8px;color:#000;letter-spacing:-0.300px;transform:scaleX(0.9982);transform-origin:0 0;">3&quot;1/8</div>
<div class="a" style="left:694.2px;top:351.3px;width:18.6px;height:18.6px;background:rgba(232,232,232,0.58);"></div>
<div class="t" style="left:696.00px;top:353.17px;font-size:14.8px;color:#000;letter-spacing:0.015px;">4&quot;</div>
<div class="a" style="left:774px;top:351.3px;width:39px;height:18.6px;background:rgba(232,232,232,0.58);"></div>
<div class="t" style="left:776.90px;top:353.17px;font-size:14.8px;color:#000;letter-spacing:-0.190px;">3&quot;1/8</div>
<div class="a" style="left:491.8px;top:425px;width:34px;height:18.6px;background:rgba(232,232,232,0.92);"></div>
<div class="t" style="left:494.70px;top:427.07px;font-size:14.8px;color:#000;letter-spacing:-0.300px;transform:scaleX(0.9783);transform-origin:0 0;">5/16</div>
<div class="a" style="left:510.4px;top:455.6px;width:38.3px;height:19.3px;background:rgba(232,232,232,0.92);"></div>
<div class="t" style="left:512.60px;top:458.17px;font-size:14.8px;color:#000;letter-spacing:-0.040px;">2&quot;1/2</div>
<div class="a" style="left:510.4px;top:518px;width:18.2px;height:18.6px;background:rgba(232,232,232,0.92);"></div>
<div class="t" style="left:512.60px;top:520.07px;font-size:14.8px;color:#000;letter-spacing:-0.300px;transform:scaleX(0.9632);transform-origin:0 0;">3&quot;</div>
<div class="a" style="left:510.4px;top:611.9px;width:38.3px;height:19.1px;background:rgba(232,232,232,0.92);"></div>
<div class="t" style="left:528.00px;top:614.37px;font-size:14.8px;color:#000;letter-spacing:-0.300px;transform:scaleX(0.8511);transform-origin:0 0;">1/2</div>
<div class="a" style="left:475.4px;top:611.9px;width:54.3px;height:19.1px;background:rgba(232,232,232,0.92);"></div>
<div class="t" style="left:478.30px;top:614.37px;font-size:14.8px;color:#000;letter-spacing:-0.278px;">1&#x27;-5&quot;1/8</div>
<div class="a" style="left:510.4px;top:645.1px;width:38.3px;height:18.6px;background:rgba(232,232,232,0.92);"></div>
<div class="t" style="left:511.80px;top:647.17px;font-size:14.8px;color:#000;letter-spacing:0.160px;">8&quot;1/2</div>
<div class="a" style="left:510.4px;top:767.2px;width:38.3px;height:18.6px;background:rgba(232,232,232,0.92);"></div>
<div class="t" style="left:512.60px;top:769.27px;font-size:14.8px;color:#000;letter-spacing:-0.040px;">2&quot;1/2</div>
<div class="a" style="left:491.8px;top:799.1px;width:34px;height:18.6px;background:rgba(232,232,232,0.92);"></div>
<div class="t" style="left:494.70px;top:801.37px;font-size:14.8px;color:#000;letter-spacing:-0.300px;transform:scaleX(0.9783);transform-origin:0 0;">5/16</div>
<div class="a" style="left:580.2px;top:608.2px;width:15.8px;height:22.8px;background:#fff;"></div>
<div class="t" style="left:583.40px;top:611.94px;font-size:15.9px;color:#111;">B</div>
<div class="a" style="left:809.3px;top:608.2px;width:15.8px;height:22.8px;background:#fff;"></div>
<div class="t" style="left:812.40px;top:611.94px;font-size:15.9px;color:#111;">B</div>
<div class="a" style="left:560.3px;top:821px;width:15.8px;height:22.8px;background:#fff;"></div>
<div class="t" style="left:563.20px;top:824.74px;font-size:15.9px;color:#111;">C</div>
<div class="t" style="left:831.60px;top:824.74px;font-size:15.9px;color:#111;">C</div>
<div class="a" style="left:1044.2px;top:200px;width:39.9px;height:40px;background:#ececec;"></div>
<div class="a" style="left:1084.3px;top:202px;width:1px;height:36px;background:#e2e2e2;"></div>
<div class="a" style="left:913px;top:202px;width:1px;height:34.6px;background:#d6d6d6;"></div>
<svg class="a" style="left:0;top:0" width="1920" height="260"><path d="M839.1999999999999,216.2 L834.3,211.6 M838.5,211.6 H834.3 V215.79999999999998 M846.2,216.2 L851.1,211.6 M846.9,211.6 H851.1 V215.79999999999998 M839.1999999999999,223.6 L834.3,228.2 M838.5,228.2 H834.3 V224.0 M846.2,223.6 L851.1,228.2 M846.9,228.2 H851.1 V224.0 " stroke="#111" stroke-width="1.25" fill="none"/>
<path d="M876.6,228.9 C870.6,231 866.6,226.4 868.6,220.6 C870,216.8 873,214.4 875.8,213 M870.4,212.9 H876.1 V218.6" stroke="#111" stroke-width="1.4" fill="none"/>
<path d="M879.2,210.6 C885.4,208.6 889.8,212.8 887.4,218.6 C886,222 883,224.8 880.2,226.6 M886,226.7 H879.9 V221" stroke="#111" stroke-width="1.4" fill="none"/>
<path d="M898.2,218.3 L903,223 L907.9,218.3" stroke="#111" stroke-width="1.2" fill="none"/>
<path d="M923.3,210.4 V226.2 H938.8 M919.5,213.9 H935.3 V229.7" stroke="#d2d2d2" stroke-width="1.7" fill="none"/>
<path d="M949.2,218.3 L954,223 L958.9,218.3" stroke="#111" stroke-width="1.2" fill="none"/>
<path d="M974.8,216.5 L980.5999999999999,210.7 H993.4999999999999 V223.49999999999997 L987.6999999999999,229.29999999999998 H974.8 Z" fill="none" stroke="#111" stroke-width="1.45" stroke-linejoin="round"/><path d="M980.5999999999999,210.7 V223.49999999999997 H993.4999999999999 M980.5999999999999,223.49999999999997 L974.8,229.29999999999998" stroke="#111" stroke-width="1" fill="none"/><path d="M980.5999999999999,219.49999999999997 V223.49999999999997 H983.8 M990.4999999999999,223.49999999999997 H993.4999999999999" stroke="#111" stroke-width="1.8" fill="none"/><path d="M974.8,216.5 H987.6999999999999 V229.29999999999998 M987.6999999999999,216.5 L993.4999999999999,210.7" stroke="#111" stroke-width="1.45" fill="none" stroke-linejoin="round"/>
<path d="M1014.6999999999999,216.5 L1020.4999999999999,210.7 H1033.3999999999999 V223.49999999999997 L1027.6,229.29999999999998 H1014.6999999999999 Z" fill="#c6c6c6" stroke="#111" stroke-width="1.45" stroke-linejoin="round"/><path d="M1020.4999999999999,210.7 V223.49999999999997 H1033.3999999999999 M1020.4999999999999,223.49999999999997 L1014.6999999999999,229.29999999999998" stroke="#111" stroke-width="1" fill="none"/><path d="M1020.4999999999999,219.49999999999997 V223.49999999999997 H1023.6999999999999 M1030.3999999999999,223.49999999999997 H1033.3999999999999" stroke="#111" stroke-width="1.8" fill="none"/><path d="M1014.6999999999999,216.5 H1027.6 V229.29999999999998 M1027.6,216.5 L1033.3999999999999,210.7" stroke="#111" stroke-width="1.45" fill="none" stroke-linejoin="round"/>
<path d="M1054.1,217.8 H1067.4 V229.7 H1054.1 Z" fill="#000"/><path d="M1054.3,216.6 L1060.8,210.4 H1073.6 L1067.4,216.6 Z" fill="#000"/><path d="M1068.5,217.4 L1073.7,212 V223.8 L1068.5,229.4 Z" fill="#000"/>
<path d="M1095.5,214.5 L1109,212.4 L1114.8,213.2 L1101.8,217.3 Z M1095.5,214.5 V222 L1101.8,226.5 V217.3 M1101.8,226.5 L1114.8,219.3 V213.2" stroke="#111" stroke-width="1.8" fill="#fff" stroke-linejoin="round"/>
<path d="M1143.7,209.9 V229.7 M1146.6,209.9 V229.7" stroke="#d4d4d4" stroke-width="1.3" fill="none"/>
<path d="M1141.2,218.4 C1137,219.2 1135.2,220.4 1135.2,221.4 C1135.2,223.4 1140,224.7 1145,224.7 C1150.5,224.7 1154.9,223.3 1154.9,221.3 C1154.9,220 1152.6,218.9 1149.2,218.4" stroke="#d4d4d4" stroke-width="1.2" fill="none"/>
<path d="M1141,222.6 L1137.6,224.6 L1141,226.8 Z" fill="#d4d4d4"/>
<path d="M1175.4,218.9 L1185,210.9 L1194.7,218.9 M1177.4,218.6 V228.1 H1182.6 V222.1 H1187.5 V228.1 H1192.5 V218.6" stroke="#111" stroke-width="1.45" fill="none" stroke-linejoin="miter"/></svg>
<div class="t" style="left:870.00px;top:259.47px;font-size:15.16px;color:#f26c22;font-weight:bold;letter-spacing:-0.300px;transform:scaleX(0.9965);transform-origin:0 0;">Production cost</div>
<div class="t" style="left:988.40px;top:259.47px;font-size:15.16px;color:#1a1a1a;">-</div>
<div class="t" style="left:999.60px;top:259.47px;font-size:15.16px;color:#111;font-weight:bold;letter-spacing:-0.300px;transform:scaleX(0.9756);transform-origin:0 0;">225 US$</div>
<svg class="a" style="left:0;top:0" width="1920" height="400"><path d="M1098,328 A50.5,5.6 0 1 0 1199,328 A50.5,5.6 0 1 0 1098,328 Z M1110.1,328 A38.4,3.1 0 1 1 1186.9,328 A38.4,3.1 0 1 1 1110.1,328 Z" fill="#e1e1e1" fill-rule="evenodd"/>
<path d="M1093,326.5 H1102 M1187,326.5 H1200" stroke="#8a8a8a" stroke-width="1.1"/>
<rect x="1123.2" y="283.2" width="50.6" height="50.4" rx="1.2" fill="#b8b8b8" stroke="#7e7e7e" stroke-width="1"/>
<path d="M1123.6,333.2 L1129.2,327.5 H1167.8 L1173.4,333.2 Z" fill="#b2b2b2"/>
<rect x="1129.2" y="289.3" width="38.6" height="38.2" fill="#c3c3c3" stroke="#7e7e7e" stroke-width="1"/>
<path d="M1123.6,283.6 L1129.2,289.3 M1173.4,283.6 L1167.8,289.3 M1123.6,333.2 L1129.2,327.5 M1173.4,333.2 L1167.8,327.5" stroke="#7e7e7e" stroke-width="0.9"/>
<rect x="1143.9" y="332.1" width="1.8" height="1.7" fill="#111"/></svg>
<div class="t" style="left:1144.00px;top:302.98px;font-size:13.14px;color:#fff;font-weight:bold;letter-spacing:-0.300px;transform:scaleX(0.7710);transform-origin:0 0;">-X</div>
<svg class="a" style="left:1023.2px;top:376.6px" width="8" height="8"><path d="M7,0.2 V7 H0.2 Z" fill="#444"/></svg>
<div class="t" style="left:1045.20px;top:370.28px;font-size:15.26px;color:#333;font-weight:bold;letter-spacing:-0.300px;transform:scaleX(0.9446);transform-origin:0 0;">CON1</div>
<svg class="a" style="left:1048px;top:404.4px" width="8" height="8"><path d="M7,0.2 V7 H0.2 Z" fill="#444"/></svg>
<div class="t" style="left:1070.20px;top:398.08px;font-size:15.26px;color:#333;font-weight:bold;letter-spacing:-0.167px;">Members</div>
<svg class="a" style="left:1048px;top:488.4px" width="8" height="8"><path d="M7,0.2 V7 H0.2 Z" fill="#444"/></svg>
<div class="t" style="left:1070.20px;top:482.08px;font-size:15.26px;color:#333;font-weight:bold;letter-spacing:-0.300px;transform:scaleX(0.9817);transform-origin:0 0;">Load effects</div>
<svg class="a" style="left:1048px;top:544.4px" width="8" height="8"><path d="M7,0.2 V7 H0.2 Z" fill="#444"/></svg>
<div class="t" style="left:1070.20px;top:538.08px;font-size:15.26px;color:#333;font-weight:bold;letter-spacing:-0.300px;transform:scaleX(0.9957);transform-origin:0 0;">Operations [P]</div>
<svg class="a" style="left:1062.8px;top:562.1px" width="138" height="27"><path d="M0,0 H118.2 L137.4,13.35 L118.2,26.7 H0 Z" fill="#f26c22"/></svg>
<div class="a" style="left:1070.4px;top:429.6px;width:13.6px;height:13px;background:#e6e6e6;border-radius:2px;"></div>
<svg class="a" style="left:1070px;top:426.6px" width="20" height="18"><path d="M3.1,9.7 L7,13.7 L16.1,1.6" stroke="#ff8400" stroke-width="2.4" fill="none"/></svg>
<div class="t" style="left:1096.80px;top:428.90px;font-size:15.48px;color:#4a4a4a;text-decoration:underline;">C</div>
<div class="a" style="left:1070.4px;top:457.6px;width:13.6px;height:13px;background:#e6e6e6;border-radius:2px;"></div>
<svg class="a" style="left:1070px;top:454.6px" width="20" height="18"><path d="M3.1,9.7 L7,13.7 L16.1,1.6" stroke="#ff8400" stroke-width="2.4" fill="none"/></svg>
<div class="t" style="left:1096.80px;top:456.90px;font-size:15.48px;color:#4a4a4a;">B</div>
<div class="a" style="left:1070.4px;top:513.6px;width:13.6px;height:13px;background:#e6e6e6;border-radius:2px;"></div>
<svg class="a" style="left:1070px;top:510.6px" width="20" height="18"><path d="M3.1,9.7 L7,13.7 L16.1,1.6" stroke="#ff8400" stroke-width="2.4" fill="none"/></svg>
<div class="t" style="left:1096.80px;top:512.90px;font-size:15.48px;color:#4a4a4a;letter-spacing:-0.300px;transform:scaleX(0.7608);transform-origin:0 0;">LE1</div>
<div class="a" style="left:1070.4px;top:569.8px;width:13.6px;height:13px;background:#e6e6e6;border-radius:2px;"></div>
<svg class="a" style="left:1070px;top:566.8px" width="20" height="18"><path d="M3.1,9.7 L7,13.7 L16.1,1.6" stroke="#909090" stroke-width="2.4" fill="none"/></svg>
<div class="t" style="left:1096.80px;top:568.90px;font-size:15.48px;color:#fff;letter-spacing:-0.300px;transform:scaleX(0.7572);transform-origin:0 0;">EP1</div>
<div class="a" style="left:1070.4px;top:597.8px;width:13.6px;height:13px;background:#e6e6e6;border-radius:2px;"></div>
<svg class="a" style="left:1070px;top:594.8px" width="20" height="18"><path d="M3.1,9.7 L7,13.7 L16.1,1.6" stroke="#9a9a9a" stroke-width="2.4" fill="none"/></svg>
<div class="t" style="left:1096.80px;top:596.90px;font-size:15.48px;color:#4a4a4a;letter-spacing:-0.300px;transform:scaleX(0.8024);transform-origin:0 0;">STIFF1</div>
<div class="a" style="left:1070.4px;top:625.8px;width:13.6px;height:13px;background:#e6e6e6;border-radius:2px;"></div>
<svg class="a" style="left:1070px;top:622.8px" width="20" height="18"><path d="M3.1,9.7 L7,13.7 L16.1,1.6" stroke="#9a9a9a" stroke-width="2.4" fill="none"/></svg>
<div class="t" style="left:1096.80px;top:624.90px;font-size:15.48px;color:#4a4a4a;letter-spacing:-0.300px;transform:scaleX(0.9382);transform-origin:0 0;">RIBMid2</div>
<div class="a" style="left:1070.4px;top:653.8px;width:13.6px;height:13px;background:#e6e6e6;border-radius:2px;"></div>
<svg class="a" style="left:1070px;top:650.8px" width="20" height="18"><path d="M3.1,9.7 L7,13.7 L16.1,1.6" stroke="#9a9a9a" stroke-width="2.4" fill="none"/></svg>
<div class="t" style="left:1096.80px;top:652.90px;font-size:15.48px;color:#4a4a4a;letter-spacing:-0.300px;transform:scaleX(0.8843);transform-origin:0 0;">RIBEnd2</div>
<div class="a" style="left:1070.4px;top:681.8px;width:13.6px;height:13px;background:#e6e6e6;border-radius:2px;"></div>
<svg class="a" style="left:1070px;top:678.8px" width="20" height="18"><path d="M3.1,9.7 L7,13.7 L16.1,1.6" stroke="#9a9a9a" stroke-width="2.4" fill="none"/></svg>
<div class="t" style="left:1096.80px;top:680.90px;font-size:15.48px;color:#4a4a4a;letter-spacing:-0.300px;transform:scaleX(0.8407);transform-origin:0 0;">GRD1</div>


<!-- ================= RIGHT PANEL ================= -->
<div class="a" style="left:1218.2px;top:200px;width:6.4px;height:778px;background:#c9c9c9;"></div>
<div class="a" style="left:1224.6px;top:200px;width:695.4px;height:30.8px;background:#f26c22;"></div>
<div class="t" style="left:1237.60px;top:209.10px;font-size:15.48px;color:#fff;font-weight:bold;letter-spacing:-0.300px;transform:scaleX(0.8444);transform-origin:0 0;">EP1</div>
<div class="t" style="left:1275.60px;top:209.10px;font-size:15.48px;color:#fff;letter-spacing:-0.201px;">[End plate]</div>
<div class="t" style="left:1632.20px;top:209.10px;font-size:15.48px;color:#fbd0b5;font-weight:bold;letter-spacing:-0.300px;transform:scaleX(0.9705);transform-origin:0 0;">Autodesign</div>
<svg class="a" style="left:1723.2px;top:213.6px" width="6" height="5"><path d="M0,0 H5.6 L2.8,4.2 Z" fill="#fbd0b5"/></svg>
<div class="t" style="left:1748.00px;top:209.10px;font-size:15.48px;color:#f8a273;font-weight:bold;letter-spacing:-0.300px;transform:scaleX(0.9626);transform-origin:0 0;">Editor</div>
<div class="t" style="left:1813.80px;top:209.10px;font-size:15.48px;color:#fbd0b5;font-weight:bold;letter-spacing:-0.300px;transform:scaleX(0.9259);transform-origin:0 0;">Copy</div>
<div class="t" style="left:1862.60px;top:209.10px;font-size:15.48px;color:#fbd0b5;font-weight:bold;letter-spacing:-0.300px;transform:scaleX(0.9919);transform-origin:0 0;">Delete</div>
<div class="a" style="left:1903.6px;top:231px;width:10.6px;height:748px;background:#efefef;"></div>
<div class="a" style="left:1904.2px;top:232.5px;width:10.4px;height:669px;background:#cbcbcb;border-radius:4px;"></div>
<svg class="a" style="left:1247.6px;top:255.00000000000003px" width="11" height="8"><path d="M0.8,0.8 L5.2,5.6 L9.6,0.8" stroke="#f26c22" stroke-width="1.3" fill="none"/></svg>
<div class="t" style="left:1268.20px;top:251.12px;font-size:15.69px;color:#444;font-weight:bold;letter-spacing:-0.300px;transform:scaleX(0.9441);transform-origin:0 0;">End plate</div>
<svg class="a" style="left:1247.6px;top:696.9px" width="11" height="8"><path d="M0.8,0.8 L5.2,5.6 L9.6,0.8" stroke="#f26c22" stroke-width="1.3" fill="none"/></svg>
<div class="t" style="left:1268.20px;top:693.02px;font-size:15.69px;color:#444;font-weight:bold;letter-spacing:-0.300px;transform:scaleX(0.9204);transform-origin:0 0;">Bolts</div>
<svg class="a" style="left:1247.6px;top:952.6px" width="11" height="8"><path d="M0.8,0.8 L5.2,5.6 L9.6,0.8" stroke="#f26c22" stroke-width="1.3" fill="none"/></svg>
<div class="t" style="left:1268.20px;top:948.72px;font-size:15.69px;color:#444;font-weight:bold;letter-spacing:-0.300px;transform:scaleX(0.9503);transform-origin:0 0;">Welds</div>
<div class="t" style="left:1268.20px;top:281.90px;font-size:15.48px;color:#4a4a4a;letter-spacing:-0.300px;transform:scaleX(0.9988);transform-origin:0 0;">Member 1</div>
<div class="a" style="left:1423.8px;top:275.8px;width:444.3px;height:24.8px;background:#efefef;border:1px solid #c9c9c9"></div>
<div class="t" style="left:1431.80px;top:280.85px;font-size:15.48px;color:#8a8a8a;">B</div>
<svg class="a" style="left:1850.1000000000001px;top:284.5px" width="11.6" height="7.2"><path d="M1,1 L5.8,6.2 L10.6,1" stroke="#666" stroke-width="1.15" fill="none"/></svg>
<div class="t" style="left:1268.20px;top:311.90px;font-size:15.48px;color:#4a4a4a;letter-spacing:-0.300px;transform:scaleX(0.9988);transform-origin:0 0;">Member 2</div>
<div class="a" style="left:1423.8px;top:305.8px;width:444.3px;height:24.8px;background:#efefef;border:1px solid #c9c9c9"></div>
<div class="t" style="left:1431.80px;top:310.85px;font-size:15.48px;color:#8a8a8a;letter-spacing:-0.082px;">Not specified</div>
<svg class="a" style="left:1850.1000000000001px;top:314.5px" width="11.6" height="7.2"><path d="M1,1 L5.8,6.2 L10.6,1" stroke="#666" stroke-width="1.15" fill="none"/></svg>
<div class="t" style="left:1268.20px;top:341.90px;font-size:15.48px;color:#4a4a4a;letter-spacing:-0.300px;transform:scaleX(0.9968);transform-origin:0 0;">Connected to</div>
<div class="a" style="left:1423.8px;top:335.8px;width:386.8px;height:24.8px;background:#efefef;border:1px solid #c9c9c9"></div>
<div class="t" style="left:1431.80px;top:340.85px;font-size:15.48px;color:#8a8a8a;">C</div>
<svg class="a" style="left:1793.0px;top:344.5px" width="11.6" height="7.2"><path d="M1,1 L5.8,6.2 L10.6,1" stroke="#666" stroke-width="1.15" fill="none"/></svg>
<div class="t" style="left:1268.20px;top:371.90px;font-size:15.48px;color:#4a4a4a;letter-spacing:-0.080px;">Material</div>
<div class="a" style="left:1423.8px;top:365.8px;width:444.3px;height:24.8px;background:#efefef;border:1px solid #c9c9c9"></div>
<div class="t" style="left:1431.80px;top:370.85px;font-size:15.48px;color:#8a8a8a;letter-spacing:-0.300px;transform:scaleX(0.9522);transform-origin:0 0;">A572 Gr.50</div>
<svg class="a" style="left:1850.1000000000001px;top:374.5px" width="11.6" height="7.2"><path d="M1,1 L5.8,6.2 L10.6,1" stroke="#666" stroke-width="1.15" fill="none"/></svg>
<div class="t" style="left:1268.20px;top:401.90px;font-size:15.48px;color:#4a4a4a;letter-spacing:-0.300px;transform:scaleX(0.9644);transform-origin:0 0;">Thickness [in]</div>
<div class="a" style="left:1423.8px;top:395.8px;width:445.2px;height:24.8px;background:#efefef;border:1px solid #c9c9c9"></div>
<div class="t" style="left:1429.00px;top:402.30px;font-size:15.48px;color:#8a8a8a;letter-spacing:-0.300px;transform:scaleX(0.9857);transform-origin:0 0;">13/16</div>
<svg class="a" style="left:1850px;top:399px" width="12" height="20"><path d="M1,6 L5.9,1.2 L10.8,6 M1,13 L5.9,17.8 L10.8,13" stroke="#666" stroke-width="1.1" fill="none"/></svg>
<div class="t" style="left:1268.20px;top:431.90px;font-size:15.48px;color:#4a4a4a;letter-spacing:-0.277px;">Connection type</div>
<div class="a" style="left:1423.8px;top:425.8px;width:474.5px;height:24.8px;background:#efefef;border:1px solid #c9c9c9"></div>
<div class="t" style="left:1431.80px;top:430.85px;font-size:15.48px;color:#8a8a8a;letter-spacing:-0.079px;">Bolted</div>
<svg class="a" style="left:1880.4px;top:434.5px" width="11.6" height="7.2"><path d="M1,1 L5.8,6.2 L10.6,1" stroke="#666" stroke-width="1.15" fill="none"/></svg>
<div class="t" style="left:1268.20px;top:462.90px;font-size:15.48px;color:#4a4a4a;letter-spacing:-0.300px;transform:scaleX(0.9850);transform-origin:0 0;">Dimensions</div>
<div class="a" style="left:1423.8px;top:457.90000000000003px;width:474.5px;height:24.8px;background:#efefef;border:1px solid #c9c9c9"></div>
<div class="t" style="left:1431.80px;top:462.95px;font-size:15.48px;color:#8a8a8a;letter-spacing:0.132px;">To profile</div>
<svg class="a" style="left:1880.4px;top:466.6px" width="11.6" height="7.2"><path d="M1,1 L5.8,6.2 L10.6,1" stroke="#666" stroke-width="1.15" fill="none"/></svg>
<div class="t" style="left:1268.20px;top:493.90px;font-size:15.48px;color:#4a4a4a;letter-spacing:0.013px;">Top [in]</div>
<div class="a" style="left:1423.8px;top:488.90000000000003px;width:474.5px;height:24.8px;background:#efefef;border:1px solid #c9c9c9"></div>
<div class="t" style="left:1429.00px;top:495.40px;font-size:15.48px;color:#8a8a8a;letter-spacing:-0.043px;">5/16</div>
<div class="t" style="left:1268.20px;top:524.90px;font-size:15.48px;color:#4a4a4a;letter-spacing:-0.096px;">Left [in]</div>
<div class="a" style="left:1423.8px;top:519.9px;width:474.5px;height:24.8px;background:#efefef;border:1px solid #c9c9c9"></div>
<div class="t" style="left:1429.00px;top:526.40px;font-size:15.48px;color:#8a8a8a;letter-spacing:-0.300px;transform:scaleX(0.9779);transform-origin:0 0;">0&quot;</div>
<div class="t" style="left:1268.20px;top:555.90px;font-size:15.48px;color:#4a4a4a;letter-spacing:0.101px;">Bottom [in]</div>
<div class="a" style="left:1423.8px;top:550.9px;width:474.5px;height:24.8px;background:#efefef;border:1px solid #c9c9c9"></div>
<div class="t" style="left:1429.00px;top:557.40px;font-size:15.48px;color:#8a8a8a;letter-spacing:-0.043px;">5/16</div>
<div class="t" style="left:1268.20px;top:586.90px;font-size:15.48px;color:#4a4a4a;letter-spacing:-0.121px;">Right [in]</div>
<div class="a" style="left:1423.8px;top:581.9px;width:474.5px;height:24.8px;background:#efefef;border:1px solid #c9c9c9"></div>
<div class="t" style="left:1429.00px;top:588.40px;font-size:15.48px;color:#8a8a8a;letter-spacing:-0.300px;transform:scaleX(0.9779);transform-origin:0 0;">0&quot;</div>
<div class="t" style="left:1268.20px;top:617.50px;font-size:15.48px;color:#4a4a4a;letter-spacing:-0.287px;">Backing plate</div>
<div class="a" style="left:1423.8px;top:617.2px;width:15.4px;height:15px;background:#efefef;border:1px solid #d6d6d6;border-radius:1px"></div>
<div class="t" style="left:1268.20px;top:647.70px;font-size:15.48px;color:#4a4a4a;letter-spacing:-0.235px;">Notch</div>
<div class="a" style="left:1423.8px;top:647.4px;width:15.4px;height:15px;background:#efefef;border:1px solid #d6d6d6;border-radius:1px"></div>
<div class="t" style="left:1268.20px;top:722.90px;font-size:15.48px;color:#4a4a4a;letter-spacing:-0.300px;transform:scaleX(0.9339);transform-origin:0 0;">Type</div>
<div class="a" style="left:1423.8px;top:716.8px;width:444.3px;height:24.8px;background:#efefef;border:1px solid #c9c9c9"></div>
<div class="t" style="left:1431.80px;top:721.85px;font-size:15.48px;color:#8a8a8a;letter-spacing:-0.160px;">7/8 A325</div>
<svg class="a" style="left:1850.1000000000001px;top:725.5px" width="11.6" height="7.2"><path d="M1,1 L5.8,6.2 L10.6,1" stroke="#666" stroke-width="1.15" fill="none"/></svg>
<div class="t" style="left:1268.20px;top:752.90px;font-size:15.48px;color:#4a4a4a;letter-spacing:-0.250px;">Top layers [in]</div>
<div class="a" style="left:1423.8px;top:746.8px;width:474.5px;height:24.8px;background:#efefef;border:1px solid #c9c9c9"></div>
<div class="t" style="left:1429.00px;top:753.30px;font-size:15.48px;color:#8a8a8a;letter-spacing:0.073px;">-2&quot;1/2 -3&quot;</div>
<div class="t" style="left:1268.20px;top:782.90px;font-size:15.48px;color:#4a4a4a;letter-spacing:-0.291px;">Left layers [in]</div>
<div class="a" style="left:1423.8px;top:776.8px;width:474.5px;height:24.8px;background:#efefef;border:1px solid #c9c9c9"></div>
<div class="t" style="left:1429.00px;top:783.30px;font-size:15.48px;color:#8a8a8a;letter-spacing:0.144px;">-3&quot;1/8</div>
<div class="t" style="left:1268.20px;top:812.90px;font-size:15.48px;color:#4a4a4a;letter-spacing:-0.152px;">Bottom layers [in]</div>
<div class="a" style="left:1423.8px;top:806.8px;width:474.5px;height:24.8px;background:#efefef;border:1px solid #c9c9c9"></div>
<div class="t" style="left:1429.00px;top:813.30px;font-size:15.48px;color:#8a8a8a;letter-spacing:0.144px;">-2&quot;1/2</div>
<div class="t" style="left:1268.20px;top:842.90px;font-size:15.48px;color:#4a4a4a;letter-spacing:-0.293px;">Right layers [in]</div>
<div class="a" style="left:1423.8px;top:836.8px;width:474.5px;height:24.8px;background:#efefef;border:1px solid #c9c9c9"></div>
<div class="t" style="left:1429.00px;top:843.30px;font-size:15.48px;color:#8a8a8a;letter-spacing:0.144px;">-3&quot;1/8</div>
<div class="t" style="left:1268.20px;top:872.90px;font-size:15.48px;color:#4a4a4a;letter-spacing:-0.300px;transform:scaleX(0.9892);transform-origin:0 0;">Shear plane in thread</div>
<div class="a" style="left:1423.8px;top:871.5px;width:15.4px;height:15px;background:#efefef;border:1px solid #d6d6d6;border-radius:1px"></div>
<svg class="a" style="left:1423.8px;top:871.5px" width="16" height="15"><path d="M3.8,7.6 L6.6,10.6 L11.8,3.8" stroke="#b0b0b0" stroke-width="1.3" fill="none"/></svg>
<div class="t" style="left:1268.20px;top:902.90px;font-size:15.48px;color:#4a4a4a;letter-spacing:-0.300px;transform:scaleX(0.9840);transform-origin:0 0;">Shear force transfer</div>
<div class="a" style="left:1423.8px;top:896.8px;width:474.5px;height:24.8px;background:#efefef;border:1px solid #c9c9c9"></div>
<div class="t" style="left:1431.80px;top:901.85px;font-size:15.48px;color:#8a8a8a;letter-spacing:-0.199px;">Bearing - tension/shear interaction</div>
<svg class="a" style="left:1880.4px;top:905.5px" width="11.6" height="7.2"><path d="M1,1 L5.8,6.2 L10.6,1" stroke="#666" stroke-width="1.15" fill="none"/></svg>
<svg class="a" style="left:1879.4px;top:278.8px" width="14" height="20"><path d="M1,0.8 V15.2 L4.7,11.7 L7.7,18.3 L10,17.3 L7.2,10.9 H11.9 Z" fill="#fff" stroke="#6e6e6e" stroke-width="1" stroke-linejoin="round"/></svg>
<svg class="a" style="left:1879.4px;top:308.8px" width="14" height="20"><path d="M1,0.8 V15.2 L4.7,11.7 L7.7,18.3 L10,17.3 L7.2,10.9 H11.9 Z" fill="#fff" stroke="#6e6e6e" stroke-width="1" stroke-linejoin="round"/></svg>
<svg class="a" style="left:1879.4px;top:338.8px" width="14" height="20"><path d="M1,0.8 V15.2 L4.7,11.7 L7.7,18.3 L10,17.3 L7.2,10.9 H11.9 Z" fill="#fff" stroke="#6e6e6e" stroke-width="1" stroke-linejoin="round"/></svg>
<svg class="a" style="left:1877.9px;top:370.8px" width="14" height="14"><path d="M0.6,7 H13.4 M7,0.6 V13.4" stroke="#777" stroke-width="1.2" fill="none"/></svg>
<svg class="a" style="left:1877.9px;top:721.6px" width="14" height="14"><path d="M0.6,7 H13.4 M7,0.6 V13.4" stroke="#777" stroke-width="1.2" fill="none"/></svg>
<div class="a" style="left:1817.2px;top:337.4px;width:24.5px;height:22.4px;background:#d9d9d9;"></div>
<svg class="a" style="left:1817px;top:337px" width="46" height="24"><path d="M12,13.6 H21.6 V20.3 H12 Z" fill="#d6d6d6" stroke="#000" stroke-width="1.5" stroke-linejoin="round"/><path d="M12,13.6 L2.2,7.7 L11.5,7.2 L21.6,13.6 M2.2,7.7 V13.1 L12,20.3" stroke="#000" stroke-width="1.5" fill="none" stroke-linejoin="round"/><rect x="31.1" y="2.4" width="11.8" height="19.2" rx="1.2" stroke="#000" stroke-width="1.6" fill="#fff"/><circle cx="34.5" cy="5.8" r="1.1" fill="none" stroke="#000" stroke-width="0.9"/><circle cx="39.6" cy="5.8" r="1.1" fill="none" stroke="#000" stroke-width="0.9"/><circle cx="34.5" cy="18.3" r="1.1" fill="none" stroke="#000" stroke-width="0.9"/><circle cx="39.6" cy="18.3" r="1.1" fill="none" stroke="#000" stroke-width="0.9"/></svg>
<svg class="a" style="left:1874px;top:399px" width="22" height="18"><path d="M21,4.4 H1.4 M5,1 L1.4,4.4 L5,7.8 M1,13.4 H20.6 M17,10 L20.6,13.4 L17,16.8" stroke="#777" stroke-width="1.15" fill="none"/></svg>
<div class="a" style="left:1423.8px;top:973px;width:66.2px;height:8px;background:#efefef;border:1px solid #c9c9c9;border-bottom:none"></div>
<div class="a" style="left:1494.8px;top:973px;width:49.9px;height:8px;background:#efefef;border:1px solid #c9c9c9;border-bottom:none"></div>
<div class="a" style="left:1550.2px;top:973px;width:317.3px;height:8px;background:#efefef;border:1px solid #c9c9c9;border-bottom:none"></div>
<div class="a" style="left:1506.8px;top:975px;width:1.3px;height:3.6px;background:#222;"></div>
<div class="a" style="left:1509.7px;top:975px;width:1.3px;height:3.6px;background:#222;"></div>
<div class="a" style="left:1477.6px;top:976.6px;width:1.5px;height:1.4px;background:#666;"></div>


<!-- ================= STATUS ================= -->
<div id="sb" class="a">
  <svg class="tex" width="1920" height="42"><rect width="1920" height="42" filter="url(#brush)" opacity="0.24"/></svg>
  <div class="t" style="left:30.00px;top:13.98px;font-size:15.26px;color:#8c8c8c;font-weight:bold;letter-spacing:-0.300px;transform:scaleX(0.9566);transform-origin:0 0;">Design code:</div>
<div class="t" style="left:125.00px;top:13.98px;font-size:15.26px;color:#fff;font-weight:bold;letter-spacing:-0.239px;">AISC - LRFD (2022)</div>
<div class="t" style="left:286.00px;top:13.98px;font-size:15.26px;color:#8c8c8c;font-weight:bold;letter-spacing:-0.300px;transform:scaleX(0.9396);transform-origin:0 0;">Analysis:</div>
<div class="t" style="left:354.00px;top:13.98px;font-size:15.26px;color:#fff;font-weight:bold;letter-spacing:-0.300px;transform:scaleX(0.9645);transform-origin:0 0;">Stress, strain</div>
<div class="t" style="left:469.00px;top:13.98px;font-size:15.26px;color:#8c8c8c;font-weight:bold;letter-spacing:-0.300px;transform:scaleX(0.9796);transform-origin:0 0;">Load effects:</div>
<div class="t" style="left:565.00px;top:13.98px;font-size:15.26px;color:#fff;font-weight:bold;letter-spacing:-0.195px;">In equilibrium</div>
<div class="t" style="left:688.50px;top:13.98px;font-size:15.26px;color:#8c8c8c;font-weight:bold;letter-spacing:-0.300px;transform:scaleX(0.9585);transform-origin:0 0;">Units:</div>
<div class="t" style="left:739.00px;top:13.98px;font-size:15.26px;color:#fff;font-weight:bold;letter-spacing:-0.300px;transform:scaleX(0.9426);transform-origin:0 0;">in</div>
<div class="t" style="left:1765.6px;top:14.92px;font-size:15.69px;letter-spacing:-0.383px;color:#fff"><span style="color:#f26c22">www.</span>ideastatica<span style="color:#f26c22">.com</span></div>

</div>
</body>
</html>
